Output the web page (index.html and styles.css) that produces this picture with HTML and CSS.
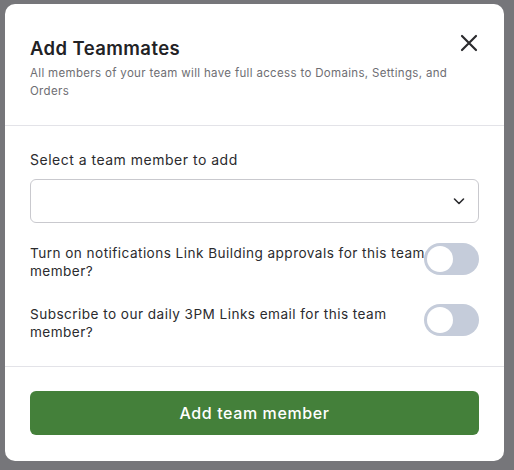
FILE: index.html
```html
<!DOCTYPE html>
<html>
<head>
<meta charset="utf-8">
<link rel="stylesheet" href="styles.css">
</head>
<body>
<div class="backdrop">
  <div class="modal">
    <div class="modal-header">
      <div class="header-row">
        <h2 class="title">Add Teammates</h2>
        <button class="close" aria-label="Close">
          <svg width="18" height="18" viewBox="0 0 18 18"><path d="M2 2L16 16M16 2L2 16" stroke="#2b2b2e" stroke-width="2.2" stroke-linecap="round"/></svg>
        </button>
      </div>
      <p class="subtitle">All members of your team will have full access to Domains, Settings, and Orders</p>
    </div>
    <div class="modal-body">
      <label class="field-label">Select a team member to add</label>
      <div class="select">
        <svg width="14" height="14" viewBox="0 0 14 14"><path d="M2.5 5L7 9.5L11.5 5" fill="none" stroke="#2b2b2e" stroke-width="1.6" stroke-linecap="round" stroke-linejoin="round"/></svg>
      </div>
      <div class="toggle-row">
        <span class="toggle-text">Turn on notifications Link Building approvals for this team member?</span>
        <span class="toggle"><span class="knob"></span></span>
      </div>
      <div class="toggle-row">
        <span class="toggle-text">Subscribe to our daily 3PM Links email for this team member?</span>
        <span class="toggle"><span class="knob"></span></span>
      </div>
    </div>
    <div class="modal-footer">
      <button class="primary">Add team member</button>
    </div>
  </div>
</div>
</body>
</html>
```
FILE: styles.css
```css
* { box-sizing: border-box; }
html, body { margin: 0; padding: 0; }
body {
  width: 514px;
  height: 470px;
  background: #76767a;
  font-family: Inter, "Noto Sans", sans-serif;
  color: #2b2b2e;
  overflow: hidden;
}
.backdrop {
  padding: 4px 10px 0 5px;
}
.modal {
  width: 499px;
  height: 457px;
  background: #fff;
  border-radius: 10px;
  display: flex;
  flex-direction: column;
}
.modal-header {
  padding: 32px 25px 0 25px;
  height: 122px;
  border-bottom: 1px solid #e3e3e8;
}
.header-row {
  display: flex;
  justify-content: space-between;
  align-items: center;
}
.title {
  margin: 0;
  font-size: 18.5px;
  font-weight: 600;
  line-height: 24px;
  color: #222225;
  letter-spacing: 0.4px;
}
.close {
  border: 0;
  background: none;
  padding: 0;
  margin-right: 1px;
  margin-top: -10px;
  width: 18px;
  height: 18px;
  display: flex;
}
.subtitle {
  margin: 4px 0 0 0;
  font-size: 11.5px;
  line-height: 18px;
  color: #6e6e73;
  width: 440px;
  letter-spacing: 0.33px;
}
.modal-body {
  padding: 25px 25px 0 25px;
  height: 241px;
  border-bottom: 1px solid #e3e3e8;
}
.field-label {
  display: block;
  font-size: 14px;
  line-height: 18px;
  color: #2b2b2e;
  letter-spacing: 0.5px;
}
.select {
  margin-top: 10px;
  height: 44px;
  border: 1px solid #c9c9ce;
  border-radius: 6px;
  display: flex;
  align-items: center;
  justify-content: flex-end;
  padding-right: 12px;
}
.toggle-row {
  display: flex;
  align-items: flex-start;
  justify-content: space-between;
  margin-top: 20px;
}
.toggle-row + .toggle-row { margin-top: 24px; }
.toggle-text {
  font-size: 13.6px;
  line-height: 18px;
  width: 396px;
  margin-top: 1px;
  letter-spacing: 0.45px;
  margin-right: -2px;
}
.toggle {
  flex: 0 0 auto;
  width: 55px;
  height: 32px;
  border-radius: 16px;
  background: #c5ccda;
  padding: 3px;
  display: flex;
}
.knob {
  width: 26px;
  height: 26px;
  border-radius: 50%;
  background: #fff;
}
.modal-footer {
  padding: 24px 25px 0 25px;
}
.primary {
  width: 100%;
  height: 44px;
  border: 0;
  border-radius: 6px;
  background: #44803a;
  color: #fff;
  font-family: Inter, "Noto Sans", sans-serif;
  font-size: 16px;
  font-weight: 500;
  letter-spacing: 0.6px;
}
```
